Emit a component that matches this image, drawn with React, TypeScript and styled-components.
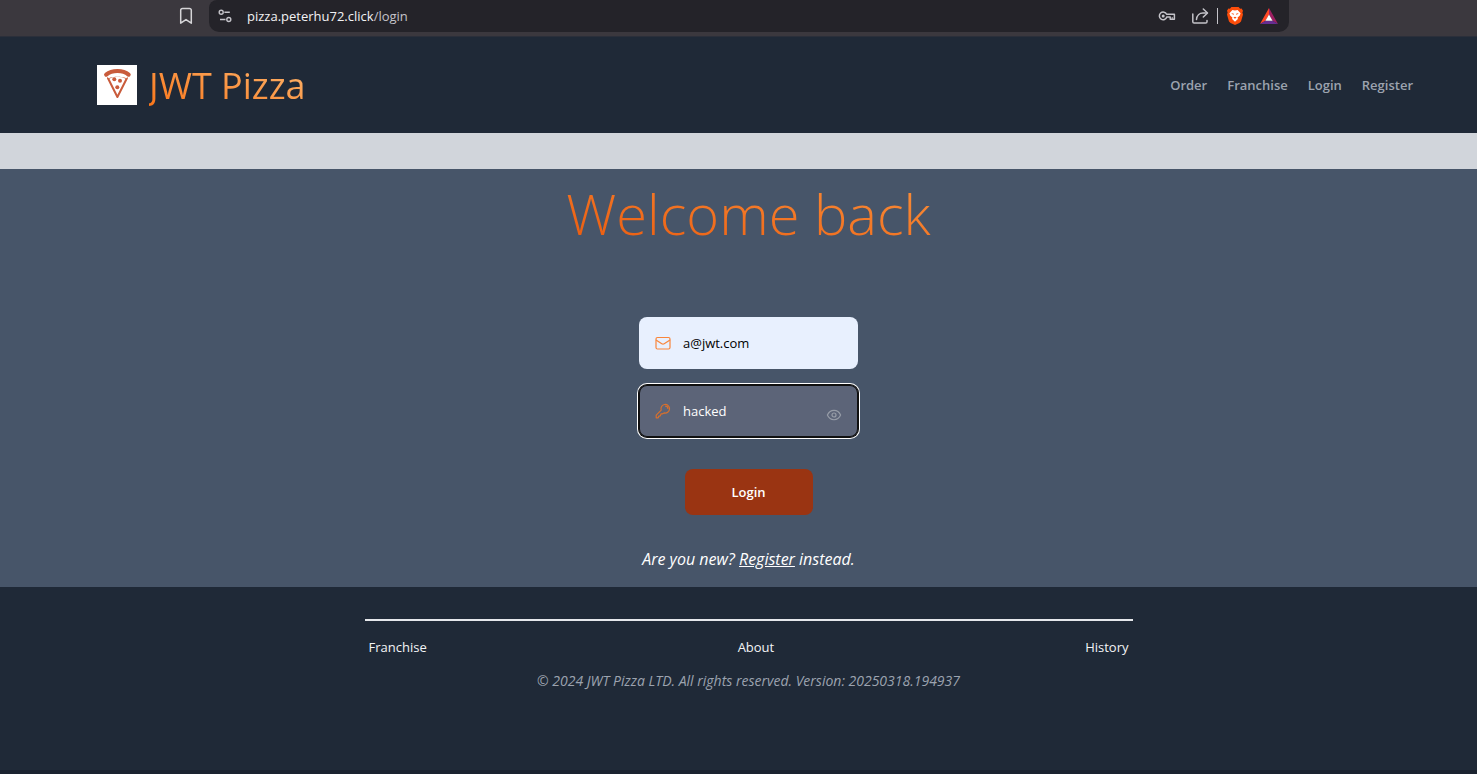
import React, { useState } from "react";
import styled, { createGlobalStyle } from "styled-components";

const GlobalStyle = createGlobalStyle`
  *, *::before, *::after { box-sizing: border-box; }
  body {
    margin: 0;
    background: #1f2937;
    font-family: "Segoe UI", "Open Sans", "Noto Sans", sans-serif;
    font-size: 13px;
    line-height: 20px;
    color: #ffffff;
  }
  a { color: inherit; text-decoration: none; }
  button, input { font: inherit; }
  h1, h2, p { margin: 0; }
`;

const Page = styled.div`
  min-height: 100vh;
  display: flex;
  flex-direction: column;
`;

const BrowserBar = styled.div`
  height: 37px;
  padding: 0 188px 5px 176px;
  display: flex;
  align-items: center;
  gap: 13px;
  background: #3b383e;
  border-bottom: 1px solid #2b2f3a;
  color: #d6d5d8;
`;

const BarButton = styled.button`
  display: flex;
  padding: 0;
  border: 0;
  background: none;
  color: inherit;
`;

const AddressBar = styled.div`
  flex: 1;
  height: 32px;
  padding: 0 10px 0 8px;
  display: flex;
  align-items: center;
  border-radius: 8px 0 10px 10px;
  background: #242329;
`;

const Address = styled.span`
  flex: 1;
  margin-left: 14px;
  color: #f2f2f4;
  span { color: #c4c3c9; }
`;

const BarTools = styled.div`
  display: flex;
  align-items: center;
  gap: 15px;
`;

const ToolGroup = styled.div`
  display: flex;
  align-items: center;
  gap: 8px;
`;

const Divider = styled.span`
  width: 1px;
  height: 16px;
  background: #c4c3c9;
`;

const Header = styled.header`
  height: 96px;
  padding: 0 64px 0 97px;
  display: flex;
  align-items: center;
  justify-content: space-between;
  background: #1f2937;
`;

const Brand = styled.a`
  display: flex;
  align-items: center;
  gap: 12px;
`;

const BrandName = styled.span`
  padding-top: 2px;
  font-size: 36px;
  line-height: 48px;
  font-weight: 400;
  background: linear-gradient(to top right, #f97316, #fdba74);
  background-clip: text;
  -webkit-background-clip: text;
  color: transparent;
`;

const Nav = styled.nav`
  display: flex;
  gap: 20px;
  color: #9ca3af;
  font-weight: 600;
`;

const Band = styled.div`
  height: 36px;
  background: #d1d5db;
`;

const Main = styled.main`
  display: flex;
  flex-direction: column;
  align-items: center;
  padding: 8px 0 18px 20px;
  background: #475569;
`;

const Title = styled.h1`
  padding: 0 4px;
  font-size: 56px;
  line-height: 72px;
  font-weight: 300;
  background: linear-gradient(to top right, #ea580c, #fb923c);
  background-clip: text;
  -webkit-background-clip: text;
  color: transparent;
`;

const Form = styled.form`
  width: 219px;
  margin-top: 68px;
  display: flex;
  flex-direction: column;
  gap: 16px;
`;

const Field = styled.label<{ $active?: boolean }>`
  height: 52px;
  padding: 0 16px;
  display: flex;
  align-items: center;
  gap: 12px;
  border-radius: 8px;
  color: ${(p) => (p.$active ? "#ffffff" : "#000000")};
  background: ${(p) => (p.$active ? "#5c6478" : "#e8f0fe")};
  box-shadow: ${(p) => (p.$active ? "inset 0 0 0 1px #101010, 0 0 0 1px #101010, 0 0 0 2px #ffffff" : "none")};
`;

const FieldInput = styled.input`
  flex: 1;
  min-width: 0;
  padding: 0;
  border: 0;
  outline: 0;
  background: none;
  color: inherit;
`;

const RevealButton = styled.button`
  display: flex;
  padding: 8px 0 0;
  border: 0;
  background: none;
  color: #979da8;
`;

const Submit = styled.button`
  width: 128px;
  height: 46px;
  margin-top: 16px;
  align-self: center;
  border: 0;
  border-radius: 8px;
  background: #9a3412;
  color: #ffffff;
  font-weight: 600;
`;

const Hint = styled.p`
  margin-top: 34px;
  font-size: 16px;
  font-style: italic;
  a { text-decoration: underline; }
`;

const Footer = styled.footer`
  flex: 1;
  padding: 32px 0 0 20px;
  display: flex;
  flex-direction: column;
  align-items: center;
  border-bottom: 4px solid #1b2330;
`;

const FooterNav = styled.nav`
  width: 100%;
  max-width: 768px;
  padding: 16px 4px 0;
  display: flex;
  justify-content: space-between;
  border-top: 2px solid #e5e7eb;
  color: #f3f4f6;
`;

const Legal = styled.p`
  margin-top: 14px;
  color: #9ca3af;
  font-size: 14px;
  font-style: italic;
`;

const BookmarkIcon = () => (
  <svg width="20" height="20" viewBox="0 0 20 20" fill="none" stroke="currentColor" strokeWidth="1.5">
    <path d="M4.7 4.2a1.8 1.8 0 0 1 1.8-1.8h7a1.8 1.8 0 0 1 1.8 1.8v13L10 13.6l-5.3 3.6z" strokeLinejoin="round" />
  </svg>
);

const TuneIcon = () => (
  <svg width="16" height="16" viewBox="0 0 16 16" fill="none" stroke="#c4c3c9" strokeWidth="1.4">
    <circle cx="4.2" cy="4.3" r="2" />
    <path d="M7.4 4.3h5.4M3 11.5h5.5" />
    <circle cx="11.8" cy="11.5" r="2" />
  </svg>
);

const PasswordKeyIcon = () => (
  <svg width="18" height="18" viewBox="0 0 18 18" fill="none" stroke="#c4c3c9" strokeWidth="1.5" strokeLinejoin="round">
    <path d="M8.6 7.3H16.4v5h-4.2v-2.3H8.8a3.8 3.8 0 1 1-.2-2.7z" />
    <path d="M14.2 10v2.5" strokeWidth="1" />
    <circle cx="5.2" cy="9" r="1.5" fill="#c4c3c9" stroke="none" />
  </svg>
);

const ShareIcon = () => (
  <svg width="18" height="18" viewBox="0 0 18 18" fill="none" stroke="#c4c3c9" strokeWidth="1.5" strokeLinejoin="round" strokeLinecap="round">
    <path d="M1.800 7v7.700a1.300 1.300 0 0 0 1.300 1.300h11.600a1.300 1.300 0 0 0 1.300-1.300V13.500" />
    <path d="M5.500 12.500C5.800 8.500 8.500 6 12 6h4" />
    <path d="M12.300 2l4.200 4-4.200 4" />
  </svg>
);

const BraveIcon = () => (
  <svg width="18" height="20" viewBox="0 0 18 20">
    <path d="M5.400 1h7.200l1.500 1.700 1.500-.2 1.400 2.300-.6 1.600.6 2-2 7.100-1.600 1.500L9 19l-4.400-2-1.600-1.500L1 8.400l.6-2L1 4.800l1.400-2.300 1.500.2z" fill="#fb4d0b" />
    <path d="M6.400 3.900L9 4.400l2.600-.5 3 3.300-.9 2.600-2.100 1.700.3 1.500L9 15.800 6.100 13l.3-1.500-2.100-1.700-.9-2.600z" fill="#fff" />
    <path d="M5.200 7l2.700.7-.5 1.400zM12.800 7l-2.700.7.5 1.400zM7.400 11.500L9 10.700l1.600.8L9 12.800z" fill="#fb4d0b" />
  </svg>
);

const BatIcon = () => (
  <svg width="20" height="18" viewBox="0 0 20 18">
    <path d="M10 1L1 17l5.500-3.300L10 7.500z" fill="#ff4724" />
    <path d="M10 1l9 16-5.500-3.300L10 7.500z" fill="#9e1f63" />
    <path d="M1 17h18l-5.500-3.300h-7z" fill="#662d91" />
    <path d="M10 7.400l3.600 6.400H6.400z" fill="#fff" />
  </svg>
);

const PizzaLogo = () => (
  <svg width="40" height="40" viewBox="0 0 40 40">
    <rect width="40" height="40" fill="#fff" />
    <path d="M11 13.200C17 10 24 10 29.900 13.200L20.400 32z" fill="none" stroke="#c95b3b" strokeWidth="2" strokeLinejoin="round" />
    <path d="M10 10.500C16 6.500 25 6.500 31 10.500L29.500 13.200C24 11.200 17 11.200 11.500 13.200z" fill="#fff" />
    <path d="M9.200 9.600C15 4.800 26 4.800 31.600 9.600" fill="none" stroke="#c95b3b" strokeWidth="4.200" strokeLinecap="round" />
    <g fill="#c95b3b">
      <circle cx="17.300" cy="14.300" r="2" />
      <circle cx="23" cy="15.700" r="2" />
      <circle cx="20.300" cy="22.300" r="2" />
    </g>
  </svg>
);

const MailIcon = () => (
  <svg width="16" height="16" viewBox="0 0 16 16" fill="none" stroke="#f9863b" strokeWidth="1.2" strokeLinejoin="round">
    <rect x="1" y="2.5" width="14" height="11.5" rx="1.5" />
    <path d="M1 5l5.800 3.800a2.200 2.200 0 0 0 2.400 0L15 5" />
  </svg>
);

const KeyIcon = () => (
  <svg width="16" height="16" viewBox="0 0 16 16" fill="none" stroke="#d9702c" strokeWidth="1.2" strokeLinejoin="round" strokeLinecap="round">
    <path d="M6.200 7.200a4.300 4.300 0 1 1 2.900 2.700L7.600 10.800H6.100L5.300 12.800 3.800 13.200 3.200 14.800H1.200v-2.600z" />
    <path d="M10.600 3.200a2.300 2.300 0 0 1 2.300 2.300" />
  </svg>
);

const EyeIcon = () => (
  <svg width="16" height="16" viewBox="0 0 16 16" fill="none" stroke="currentColor" strokeWidth="1.2">
    <path d="M1.400 8C4.200 1.700 11.800 1.700 14.600 8 11.800 14.300 4.200 14.300 1.400 8z" strokeLinejoin="round" />
    <circle cx="8" cy="8" r="2" />
  </svg>
);

export default function App() {
  const [email, setEmail] = useState("a@jwt.com");
  const [password, setPassword] = useState("hacked");
  const [revealed, setRevealed] = useState(true);

  return (
    <Page>
      <GlobalStyle />
      <BrowserBar>
        <BarButton aria-label="Bookmark"><BookmarkIcon /></BarButton>
        <AddressBar>
          <BarButton aria-label="Site settings"><TuneIcon /></BarButton>
          <Address>pizza.peterhu72.click<span>/login</span></Address>
          <BarTools>
            <BarButton aria-label="Passwords"><PasswordKeyIcon /></BarButton>
            <ToolGroup>
              <BarButton aria-label="Share"><ShareIcon /></BarButton>
              <Divider />
              <BarButton aria-label="Shields"><BraveIcon /></BarButton>
            </ToolGroup>
            <BarButton aria-label="Rewards"><BatIcon /></BarButton>
          </BarTools>
        </AddressBar>
      </BrowserBar>

      <Header>
        <Brand href="#home">
          <PizzaLogo />
          <BrandName>JWT Pizza</BrandName>
        </Brand>
        <Nav aria-label="Main">
          <a href="#order">Order</a>
          <a href="#franchise">Franchise</a>
          <a href="#login">Login</a>
          <a href="#register">Register</a>
        </Nav>
      </Header>
      <Band />

      <Main>
        <Title>Welcome back</Title>
        <Form onSubmit={(e: React.FormEvent) => e.preventDefault()}>
          <Field>
            <MailIcon />
            <FieldInput
              type="email"
              aria-label="Email address"
              value={email}
              onChange={(e) => setEmail(e.target.value)}
            />
          </Field>
          <Field $active>
            <KeyIcon />
            <FieldInput
              type={revealed ? "text" : "password"}
              aria-label="Password"
              value={password}
              onChange={(e) => setPassword(e.target.value)}
            />
            <RevealButton type="button" aria-label="Toggle password" onClick={() => setRevealed(!revealed)}>
              <EyeIcon />
            </RevealButton>
          </Field>
          <Submit type="submit">Login</Submit>
        </Form>
        <Hint>
          Are you new? <a href="#register">Register</a> instead.
        </Hint>
      </Main>

      <Footer>
        <FooterNav aria-label="Footer">
          <a href="#franchise">Franchise</a>
          <a href="#about">About</a>
          <a href="#history">History</a>
        </FooterNav>
        <Legal>© 2024 JWT Pizza LTD. All rights reserved. Version: 20250318.194937</Legal>
      </Footer>
    </Page>
  );
}
